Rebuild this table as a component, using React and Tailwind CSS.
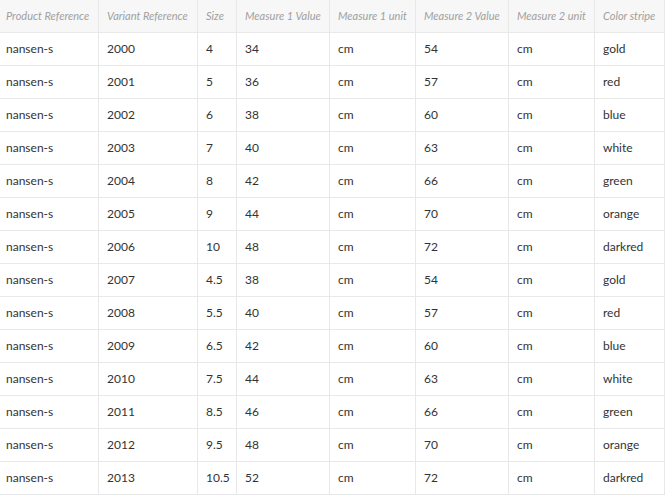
import React from 'react'

const COLS = [
  { key: 'product', label: 'Product Reference', w: 'w-[99px]' },
  { key: 'variant', label: 'Variant Reference', w: 'w-[99px]' },
  { key: 'size', label: 'Size', w: 'w-[39px]' },
  { key: 'm1v', label: 'Measure 1 Value', w: 'w-[93px]' },
  { key: 'm1u', label: 'Measure 1 unit', w: 'w-[86px]' },
  { key: 'm2v', label: 'Measure 2 Value', w: 'w-[93px]' },
  { key: 'm2u', label: 'Measure 2 unit', w: 'w-[86px]' },
  { key: 'color', label: 'Color stripe', w: 'w-[70px]' },
]

const SIZES = ['4', '5', '6', '7', '8', '9', '10', '4.5', '5.5', '6.5', '7.5', '8.5', '9.5', '10.5']
const M1 = [34, 36, 38, 40, 42, 44, 48, 38, 40, 42, 44, 46, 48, 52]
const M2 = [54, 57, 60, 63, 66, 70, 72, 54, 57, 60, 63, 66, 70, 72]
const COLORS = ['gold', 'red', 'blue', 'white', 'green', 'orange', 'darkred']

const ROWS = SIZES.map((size, i) => ({
  product: 'nansen-s',
  variant: String(2000 + i),
  size,
  m1v: M1[i],
  m1u: 'cm',
  m2v: M2[i],
  m2u: 'cm',
  color: COLORS[i % 7],
}))

export default function App() {
  return (
    <div className="w-[665px] h-[495px] overflow-hidden bg-white font-['Lato','Liberation_Sans',sans-serif]">
      {/* header */}
      <div className="flex h-[33px] bg-[#f7f7f7] border-b border-[#e8e8e8]">
        {COLS.map((c, i) => (
          <div
            key={c.key}
            className={`${c.w} shrink-0 flex items-center border-r border-[#e8e8e8] italic text-[11px] text-[#a0a0a0] whitespace-nowrap ${i === 0 ? 'pl-[6px]' : 'pl-2'}`}
          >
            {c.label}
          </div>
        ))}
      </div>

      {ROWS.map(r => (
        <div key={r.variant} className="flex h-[33px] border-b border-[#e8e8e8]">
          {COLS.map((c, i) => (
            <div
              key={c.key}
              className={`${c.w} shrink-0 flex items-center border-r border-[#e8e8e8] text-[12px] text-[#333] whitespace-nowrap ${i === 0 ? 'pl-[6px]' : 'pl-2'}`}
            >
              {r[c.key]}
            </div>
          ))}
        </div>
      ))}
    </div>
  )
}
